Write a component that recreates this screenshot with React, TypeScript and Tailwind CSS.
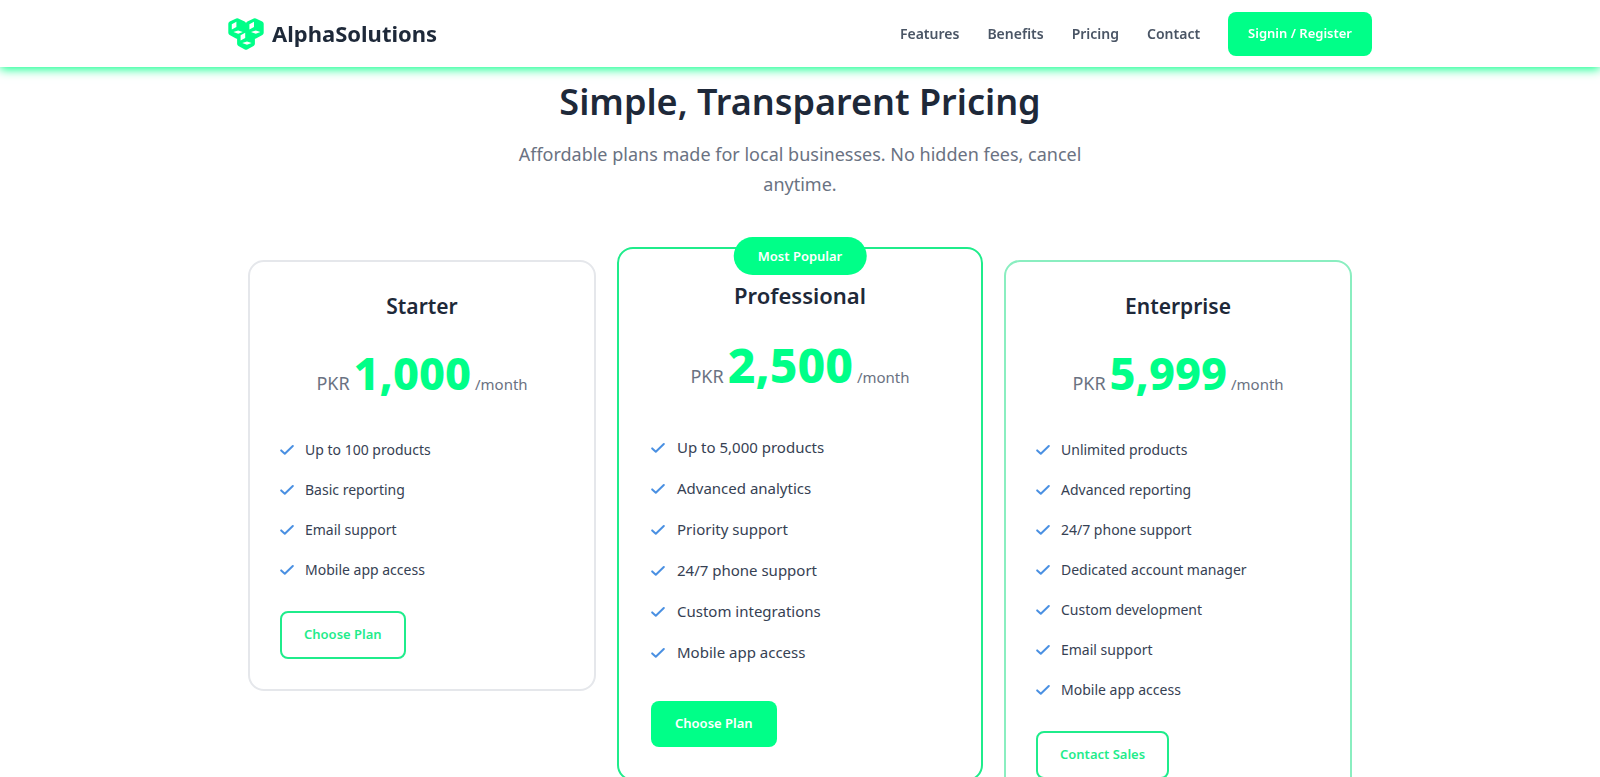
type Plan = {
  name: string;
  price: string;
  features: string[];
  cta: string;
  border: string;
};

const starter: Plan = {
  name: "Starter",
  price: "1,000",
  features: ["Up to 100 products", "Basic reporting", "Email support", "Mobile app access"],
  cta: "Choose Plan",
  border: "border-gray-200",
};

const professional: Plan = {
  name: "Professional",
  price: "2,500",
  features: [
    "Up to 5,000 products",
    "Advanced analytics",
    "Priority support",
    "24/7 phone support",
    "Custom integrations",
    "Mobile app access",
  ],
  cta: "Choose Plan",
  border: "border-[#1fec8b]",
};

const enterprise: Plan = {
  name: "Enterprise",
  price: "5,999",
  features: [
    "Unlimited products",
    "Advanced reporting",
    "24/7 phone support",
    "Dedicated account manager",
    "Custom development",
    "Email support",
    "Mobile app access",
  ],
  cta: "Contact Sales",
  border: "border-[#8aeec0]",
};

const links = ["Features", "Benefits", "Pricing", "Contact"];

const cubes = [
  { x: 9.2, y: 10.4 },
  { x: 26.8, y: 10.4 },
  { x: 18, y: 21.4 },
];

function Logo() {
  return (
    <svg viewBox="0 0 36 32" className="h-8 w-9" aria-hidden="true">
      {cubes.map(({ x, y }) => (
        <path
          key={x}
          transform={`translate(${x} ${y})`}
          d="M0 -7.6 L6.4 -4.6 V4.4 L0 7.8 L-6.4 4.4 V-4.6 Z"
          fill="#00ff88"
          stroke="#00ff88"
          strokeWidth="5"
          strokeLinejoin="round"
        />
      ))}
      {cubes.map(({ x, y }) => (
        <path
          key={x}
          transform={`translate(${x} ${y})`}
          d="M-5.4 -4.2 L-0.8 -6.6 V-1.4 L-5.4 1.2 Z M-3.8 3.6 L1 2 L5.6 3.6 L1 5.4 Z"
          fill="#fff"
        />
      ))}
    </svg>
  );
}

function Check() {
  return (
    <svg
      viewBox="0 0 14 14"
      className="size-[14px] shrink-0"
      fill="none"
      stroke="#4a90e2"
      strokeWidth="2"
      strokeLinecap="round"
      strokeLinejoin="round"
      aria-hidden="true"
    >
      <path d="M1.2 7.4 L4.8 10.8 L12.8 3" />
    </svg>
  );
}

function PlanCard({ plan }: { plan: Plan }) {
  return (
    <article className={`rounded-2xl border-2 bg-white px-[30px] pt-[26px] pb-[30px] ${plan.border}`}>
      <h3 className="text-center text-[21px] leading-9 font-semibold text-gray-800">{plan.name}</h3>
      <p className="mt-5 flex items-baseline justify-center gap-1 leading-[58px] text-gray-500">
        <span className="text-[18px]">PKR</span>
        <span className="text-[45px] font-extrabold text-[#00ff88]">{plan.price}</span>
        <span className="text-[15px]">/month</span>
      </p>
      <ul className="mt-[25px] grid gap-4 text-[14px] leading-6 text-gray-700">
        {plan.features.map((f) => (
          <li key={f} className="flex items-center gap-[11px]">
            <Check />
            {f}
          </li>
        ))}
      </ul>
      <button className="mt-[29px] h-12 rounded-lg border-2 border-[#1fec8b] px-[22px] text-[13px] font-semibold text-[#1fec8b]">
        {plan.cta}
      </button>
    </article>
  );
}

function FeaturedCard({ plan }: { plan: Plan }) {
  return (
    <article
      className={`relative -mx-[9px] -mt-[13px] rounded-2xl border-2 bg-white px-8 pt-[26px] pb-8 ${plan.border}`}
    >
      <span className="absolute -top-3 left-1/2 -translate-x-1/2 rounded-full bg-[#00ff88] px-6 text-[13px] leading-[38px] font-semibold whitespace-nowrap text-white">
        Most Popular
      </span>
      <h3 className="text-center text-[22px] leading-10 font-semibold text-gray-800">{plan.name}</h3>
      <p className="mt-5 flex items-baseline justify-center gap-1 leading-[60px] text-gray-500">
        <span className="text-[18px]">PKR</span>
        <span className="text-[48px] font-extrabold text-[#00ff88]">{plan.price}</span>
        <span className="text-[15px]">/month</span>
      </p>
      <ul className="mt-7 grid gap-4 text-[15px] leading-[25px] text-gray-700">
        {plan.features.map((f) => (
          <li key={f} className="flex items-center gap-3">
            <Check />
            {f}
          </li>
        ))}
      </ul>
      <button className="mt-9 h-[46px] rounded-lg bg-[#00ff88] px-6 text-[13px] font-semibold text-white">
        {plan.cta}
      </button>
    </article>
  );
}

export default function App() {
  return (
    <div className="h-screen overflow-x-hidden overflow-y-auto bg-white font-['Noto_Sans','Open_Sans',sans-serif]">
      <header className="sticky top-0 z-10 bg-white shadow-[0_2px_10px_#00ff88]">
        <div className="mx-auto flex h-[67px] max-w-[1144px] items-center justify-between">
          <a href="#" className="flex items-center gap-2 text-[22px] font-bold text-gray-800">
            <Logo />
            AlphaSolutions
          </a>
          <nav className="flex items-center gap-7 text-[14px] font-semibold text-gray-600">
            {links.map((l) => (
              <a key={l} href="#">
                {l}
              </a>
            ))}
            <button className="h-11 rounded-lg bg-[#00ff88] px-5 text-[13px] font-semibold text-white">
              Signin / Register
            </button>
          </nav>
        </div>
      </header>
      <main className="mx-auto max-w-[1104px] pb-12">
        <div className="mx-auto max-w-[600px] pt-2 text-center">
          <h1 className="text-[36px] leading-[54px] font-semibold text-gray-800">Simple, Transparent Pricing</h1>
          <p className="mt-[10px] text-[18px] leading-[30px] text-gray-500">
            Affordable plans made for local businesses. No hidden fees, cancel anytime.
          </p>
        </div>
        <section className="mt-[61px] grid grid-cols-3 items-start gap-[30px]">
          <PlanCard plan={starter} />
          <FeaturedCard plan={professional} />
          <PlanCard plan={enterprise} />
        </section>
      </main>
    </div>
  );
}
